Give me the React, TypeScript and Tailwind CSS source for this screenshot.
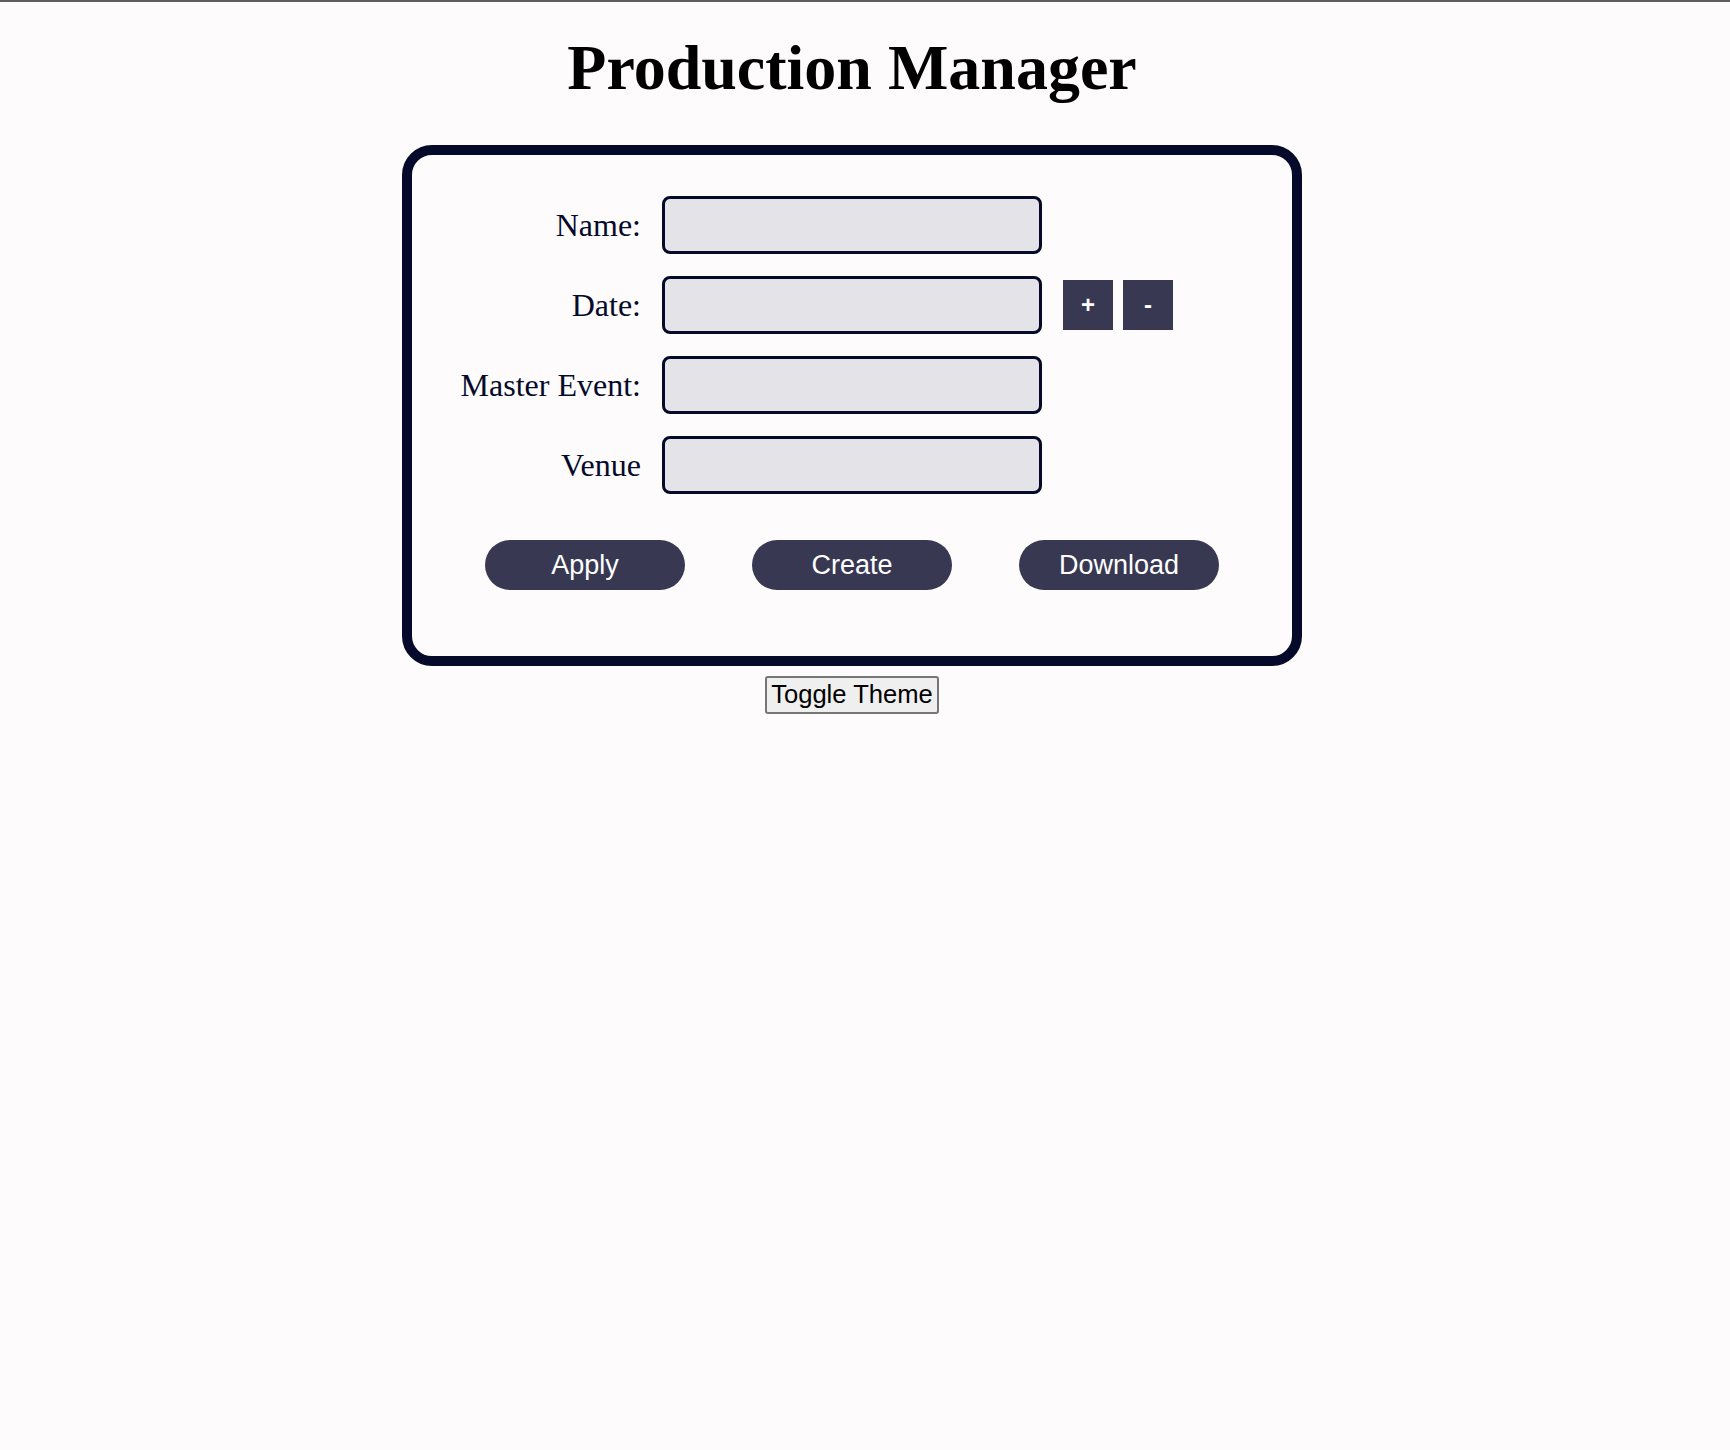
import React, { useState } from 'react';

const fields = ['Name:', 'Date:', 'Master Event:', 'Venue'];

export default function App() {
  const [dark, setDark] = useState(false);

  return (
    <div
      className={`min-h-screen border-t-2 border-[#5e5e60] pr-[26px] ${dark ? 'bg-[#1b1b2b]' : 'bg-[#fdfbfc]'}`}
      style={{ fontFamily: '"Liberation Serif", serif' }}
    >
      <h1 className="mt-[30px] text-center text-[64px] leading-[71px] font-bold text-black">
        Production Manager
      </h1>

      <div className="mx-auto mt-[42px] w-[900px] h-[521px] rounded-[30px] border-[10px] border-[#050a2a] pt-[41px] pl-[20px]">
        <div className="grid grid-cols-[209px_380px_auto] gap-x-[21px] gap-y-[22px] items-center">
          {fields.map((label) => (
            <React.Fragment key={label}>
              <label className="text-right text-[32px] leading-none text-[#050a2a]">{label}</label>
              <input
                type="text"
                className="h-[58px] w-[380px] rounded-[8px] border-[3px] border-[#050a2a] bg-[#e4e3e8] px-2 outline-none"
              />
              {label === 'Date:' ? (
                <div className="flex gap-[10px]">
                  <button
                    className="size-[50px] bg-[#393853] text-white text-[24px] font-bold"
                    style={{ fontFamily: '"Liberation Sans", sans-serif' }}
                  >
                    +
                  </button>
                  <button
                    className="size-[50px] bg-[#393853] text-white text-[24px] font-bold"
                    style={{ fontFamily: '"Liberation Sans", sans-serif' }}
                  >
                    -
                  </button>
                </div>
              ) : (
                <div />
              )}
            </React.Fragment>
          ))}
        </div>

        <div
          className="mt-[46px] -ml-[20px] flex justify-center gap-[67px]"
          style={{ fontFamily: '"Liberation Sans", sans-serif' }}
        >
          {['Apply', 'Create', 'Download'].map((b) => (
            <button
              key={b}
              className="h-[50px] w-[200px] rounded-full bg-[#393853] text-[27px] text-white"
            >
              {b}
            </button>
          ))}
        </div>
      </div>

      <div className="mt-[10px] flex justify-center">
        <button
          onClick={() => setDark(!dark)}
          className="h-[38px] rounded-[3px] border-2 border-[#767676] bg-[#efefef] px-[4px] text-[25.6px] leading-none text-black"
          style={{ fontFamily: '"Liberation Sans", sans-serif' }}
        >
          Toggle Theme
        </button>
      </div>
    </div>
  );
}
